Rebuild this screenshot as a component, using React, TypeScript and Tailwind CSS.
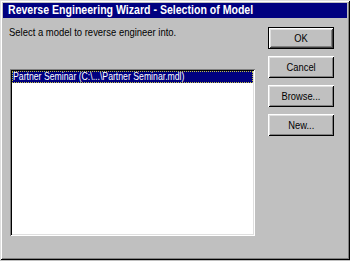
import React from "react";

const Btn = ({ label, def }: { label: string; def?: boolean }) => (
  <div
    className={
      "w-[66px] h-[22px] flex items-center justify-center text-[11px] text-black bg-[#c0c0c0] " +
      (def
        ? "border border-black shadow-[inset_1px_1px_#fff,inset_-1px_-1px_#404040,inset_2px_2px_#dfdfdf,inset_-2px_-2px_#808080]"
        : "shadow-[inset_1px_1px_#fff,inset_-1px_-1px_#000,inset_2px_2px_#dfdfdf,inset_-2px_-2px_#808080]")
    }
  >
    <span className="inline-block scale-x-[0.85]">{label}</span>
  </div>
);

export default function App() {
  return (
    <div className="w-[350px] h-[261px] bg-[#c0c0c0]">
      <div
        className="w-[350px] h-[260px] bg-[#c0c0c0] p-[3px] flex flex-col shadow-[inset_1px_1px_#dfdfdf,inset_-1px_-1px_#000,inset_2px_2px_#fff,inset_-2px_-2px_#808080]"
        style={{ fontFamily: '"Liberation Sans", Arial, sans-serif' }}
      >
        <div className="h-[15px] bg-[#000080] text-white font-bold text-[12px] leading-[15px] pl-[5px] whitespace-nowrap">
          <span className="inline-block origin-left scale-x-[0.88]">
            Reverse Engineering Wizard - Selection of Model
          </span>
        </div>
        <div className="flex flex-row flex-1">
          <div className="flex flex-col pl-[6px] pt-[8px] w-[252px]">
            <div className="text-[11px] leading-[13px] text-black whitespace-nowrap">
              <span className="inline-block origin-left scale-x-[0.86]">
                Select a model to reverse engineer into.
              </span>
            </div>
            <div className="mt-[30px] ml-[1px] w-[245px] h-[167px] bg-white p-[2px] shadow-[inset_1px_1px_#808080,inset_-1px_-1px_#fff,inset_2px_2px_#000,inset_-2px_-2px_#dfdfdf]">
              <div className="h-[12px] bg-[#000080] text-white text-[11px] leading-[11px] pl-[1px] whitespace-nowrap outline outline-1 outline-dotted outline-[#c0c040] -outline-offset-1">
                <span className="inline-block origin-left scale-x-[0.79]">
                  Partner Seminar (C:\...\Partner Seminar.mdl)
                </span>
              </div>
            </div>
          </div>
          <div className="flex flex-col gap-[7px] pl-[13px] pt-[9px]">
            <Btn label="OK" def />
            <Btn label="Cancel" />
            <Btn label="Browse..." />
            <Btn label="New..." />
          </div>
        </div>
      </div>
    </div>
  );
}
